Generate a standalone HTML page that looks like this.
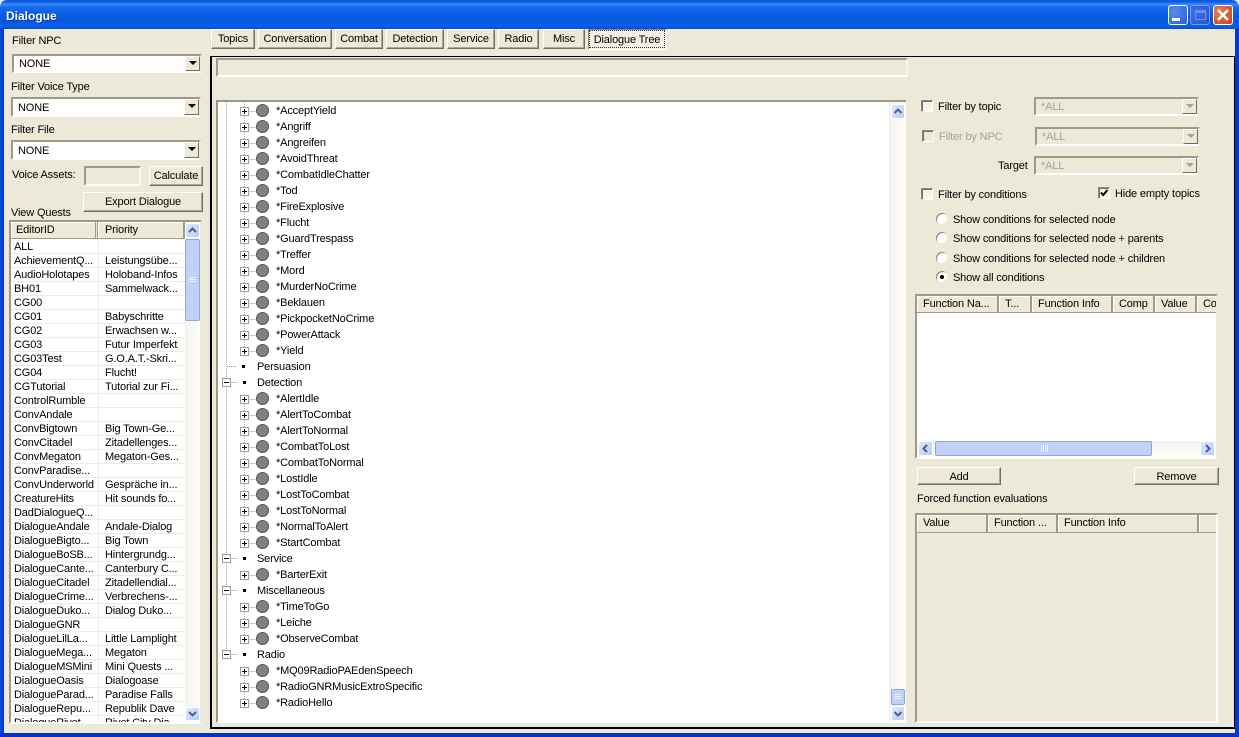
<!DOCTYPE html>
<html><head><meta charset="utf-8"><title>Dialogue</title>
<style>
html,body{margin:0;padding:0;background:#ece9d8}
body{width:1239px;height:737px;position:relative;overflow:hidden;font:11px/14px "Liberation Sans",sans-serif;color:#000;letter-spacing:-.15px}
div,span{box-sizing:border-box}
.a{position:absolute}
.t{position:absolute;white-space:nowrap;line-height:14px}
.g{color:#a5a294}
.title{left:0;top:0;width:1239px;height:29px;border-radius:7px 7px 0 0;background:linear-gradient(#0a58e0 0,#0a5ce8 2px,#3a8cf6 4px,#1a6cf0 7px,#0a5ce2 14px,#0858de 22px,#0a60ea 26px,#0650d0 29px)}
.btn{position:absolute;background:#ece9d8;border:1px solid;border-color:#fff #716f64 #716f64 #fff;box-shadow:inset -1px -1px 0 #aca899;text-align:center;line-height:14px;padding-top:2px;white-space:nowrap}
.sunk{position:absolute;border:2px solid;border-color:#9d9a8a #f6f5ef #fff #9d9a8a;background:#ece9d8}
.combo{position:absolute;border:2px solid;border-color:#9d9a8a #ece9d8 #fff #9d9a8a;background:#fff;line-height:14px;padding-left:5px;padding-top:1px}
.combo.d{background:#ece9d8;color:#a5a294}
.arrow{position:absolute;right:0;top:0;bottom:0;width:15px;background:#ece9d8;border:1px solid;border-color:#fff #716f64 #716f64 #fff}
.arrow:after{content:"";position:absolute;left:3px;top:4px;border:4px solid transparent;border-top:4px solid #000;border-bottom:0}
.d .arrow:after{border-top-color:#a5a294}
.cb{position:absolute;width:12px;height:12px;border:1px solid;border-color:#8f8c7c #fff #fff #8f8c7c;box-shadow:inset 1px 1px 0 #716f64;background:#f4f3ec}
.rd{position:absolute;width:12px;height:12px;border-radius:50%;background:#fff;box-shadow:inset 1px 1px 0 #8f8c7c,inset -1px -1px 0 #ece9d8}
.hd{position:absolute;background:#ece9d8;border-right:2px solid #9d9a8a;border-bottom:1px solid #9d9a8a;padding-left:6px;line-height:17px;white-space:nowrap;overflow:hidden;box-shadow:inset 1px 1px 0 #fff}
.sb{position:absolute;border-radius:2px;background:linear-gradient(135deg,#dfe8fd,#b9ccf6);border:1px solid #fff}
.sb svg{position:absolute;left:0;top:0}
.th{position:absolute;border-radius:2px;background:#c0d2f7;border:1px solid #8fa6dc}
.row{height:14px;position:relative;border-bottom:1px solid #ecebe4;white-space:nowrap;line-height:14px}
.row b{font-weight:400;position:absolute;left:3px;top:0}
.row i{font-style:normal;position:absolute;left:94px;top:0}
.row:before{content:"";position:absolute;left:87px;top:0;bottom:0;width:1px;background:#ecebe4}
.tr{position:absolute;white-space:nowrap;line-height:14px}
</style></head><body>

<div class="a title"></div>
<div class="t" style="left:6px;top:9px;color:#fff;font-weight:700;font-size:12px;letter-spacing:0;text-shadow:1px 1px 0 #0a3aa0">Dialogue</div>

<!-- title buttons -->
<div class="a" style="left:1168px;top:5px;width:20px;height:20px;border:1px solid #fff;border-radius:3px;background:radial-gradient(circle at 30% 30%,#5a8cf0,#2a5ce0)"><div class="a" style="left:3px;top:12px;width:8px;height:3px;background:#fff"></div></div>
<div class="a" style="left:1190px;top:5px;width:20px;height:20px;border:1px solid #7d9cea;border-radius:3px;background:radial-gradient(circle at 30% 30%,#3a70e8,#2254d8)"><div class="a" style="left:4px;top:4px;width:11px;height:10px;border:1px solid #6a90ec;border-top:3px solid #6a90ec"></div></div>
<div class="a" style="left:1213px;top:5px;width:20px;height:20px;border:1px solid #fff;border-radius:3px;background:radial-gradient(circle at 30% 30%,#e8805c,#c8401c)"><svg width="18" height="18" style="position:absolute;left:0;top:0"><path d="M4 4L14 14M14 4L4 14" stroke="#fff" stroke-width="2.4"/></svg></div>

<!-- frame -->
<div class="a" style="left:0;top:29px;width:4px;height:708px;background:linear-gradient(90deg,#0a50d8,#0831d9)"></div>
<div class="a" style="left:1235px;top:29px;width:4px;height:708px;background:linear-gradient(90deg,#0831d9,#0a3ac0)"></div>
<div class="a" style="left:0;top:733px;width:1239px;height:4px;background:#0831c9"></div>

<!-- Left panel -->
<div class="t" style="left:12px;top:34px">Filter NPC</div>
<div class="combo" style="left:12px;top:54px;width:190px;height:19px">NONE<div class="arrow"></div></div>
<div class="t" style="left:11px;top:80px">Filter Voice Type</div>
<div class="combo" style="left:11px;top:97px;width:190px;height:20px;padding-top:2px">NONE<div class="arrow"></div></div>
<div class="t" style="left:11px;top:123px">Filter File</div>
<div class="combo" style="left:11px;top:140px;width:190px;height:20px;padding-top:2px">NONE<div class="arrow"></div></div>
<div class="t" style="left:12px;top:168px">Voice Assets:</div>
<div class="sunk" style="left:84px;top:166px;width:57px;height:20px"></div>
<div class="btn" style="left:149px;top:166px;width:54px;height:20px">Calculate</div>
<div class="btn" style="left:83px;top:192px;width:120px;height:20px">Export Dialogue</div>
<div class="t" style="left:11px;top:206px">View Quests</div>

<!-- Quest list -->
<div class="a" style="left:9px;top:220px;width:193px;height:504px;border:2px solid;border-color:#9d9a8a #ece9d8 #fff #9d9a8a;background:#fff;overflow:hidden">
 <div class="hd" style="left:0;top:0;width:87px;height:17px;border-right:3px double #9d9a8a;padding-left:5px">EditorID</div>
 <div class="hd" style="left:87px;top:0;width:87px;height:17px;padding-left:7px">Priority</div>
 <div class="a" style="left:0;top:18px;width:174px;height:486px;overflow:hidden">
  <div class="row"><b>ALL</b></div>
  <div class="row"><b>AchievementQ...</b><i>Leistungsübe...</i></div>
  <div class="row"><b>AudioHolotapes</b><i>Holoband-Infos</i></div>
  <div class="row"><b>BH01</b><i>Sammelwack...</i></div>
  <div class="row"><b>CG00</b></div>
  <div class="row"><b>CG01</b><i>Babyschritte</i></div>
  <div class="row"><b>CG02</b><i>Erwachsen w...</i></div>
  <div class="row"><b>CG03</b><i>Futur Imperfekt</i></div>
  <div class="row"><b>CG03Test</b><i>G.O.A.T.-Skri...</i></div>
  <div class="row"><b>CG04</b><i>Flucht!</i></div>
  <div class="row"><b>CGTutorial</b><i>Tutorial zur Fi...</i></div>
  <div class="row"><b>ControlRumble</b></div>
  <div class="row"><b>ConvAndale</b></div>
  <div class="row"><b>ConvBigtown</b><i>Big Town-Ge...</i></div>
  <div class="row"><b>ConvCitadel</b><i>Zitadellenges...</i></div>
  <div class="row"><b>ConvMegaton</b><i>Megaton-Ges...</i></div>
  <div class="row"><b>ConvParadise...</b></div>
  <div class="row"><b>ConvUnderworld</b><i>Gespräche in...</i></div>
  <div class="row"><b>CreatureHits</b><i>Hit sounds fo...</i></div>
  <div class="row"><b>DadDialogueQ...</b></div>
  <div class="row"><b>DialogueAndale</b><i>Andale-Dialog</i></div>
  <div class="row"><b>DialogueBigto...</b><i>Big Town</i></div>
  <div class="row"><b>DialogueBoSB...</b><i>Hintergrundg...</i></div>
  <div class="row"><b>DialogueCante...</b><i>Canterbury C...</i></div>
  <div class="row"><b>DialogueCitadel</b><i>Zitadellendial...</i></div>
  <div class="row"><b>DialogueCrime...</b><i>Verbrechens-...</i></div>
  <div class="row"><b>DialogueDuko...</b><i>Dialog Duko...</i></div>
  <div class="row"><b>DialogueGNR</b></div>
  <div class="row"><b>DialogueLilLa...</b><i>Little Lamplight</i></div>
  <div class="row"><b>DialogueMega...</b><i>Megaton</i></div>
  <div class="row"><b>DialogueMSMini</b><i>Mini Quests ...</i></div>
  <div class="row"><b>DialogueOasis</b><i>Dialogoase</i></div>
  <div class="row"><b>DialogueParad...</b><i>Paradise Falls</i></div>
  <div class="row"><b>DialogueRepu...</b><i>Republik Dave</i></div>
  <div class="row"><b>DialogueRivet...</b><i>Rivet City Dia...</i></div>
 </div>
 <div class="a" style="left:174px;top:0;width:15px;height:500px;background:linear-gradient(90deg,#f3f1ec,#fdfdfa)"></div>
 <div class="sb" style="left:174px;top:1px;width:15px;height:15px"><svg width="13" height="13"><path d="M3 8L6.5 4.5L10 8" fill="none" stroke="#4d6185" stroke-width="2"/></svg></div>
 <div class="th" style="left:174px;top:17px;width:15px;height:82px"><svg width="13" height="80" style="position:absolute;left:0;top:0"><path d="M3 37.5H10M3 39.5H10M3 41.5H10" stroke="#eef3fd" stroke-width="1"/></svg></div>
 <div class="sb" style="left:174px;top:485px;width:15px;height:14px"><svg width="13" height="12"><path d="M3 4L6.5 7.5L10 4" fill="none" stroke="#4d6185" stroke-width="2"/></svg></div>
</div>

<!-- Tabs -->
<div class="btn" style="left:211px;top:29px;width:44px;height:20px">Topics</div>
<div class="btn" style="left:258px;top:29px;width:74px;height:20px">Conversation</div>
<div class="btn" style="left:335px;top:29px;width:48px;height:20px">Combat</div>
<div class="btn" style="left:386px;top:29px;width:58px;height:20px">Detection</div>
<div class="btn" style="left:447px;top:29px;width:48px;height:20px">Service</div>
<div class="btn" style="left:498px;top:29px;width:41px;height:20px">Radio</div>
<div class="btn" style="left:543px;top:29px;width:42px;height:20px">Misc</div>
<div class="a" style="left:588px;top:29px;width:79px;height:21px;background:#f3f1e6;border:1px solid #8f8c7c;border-right-color:#fff;border-bottom-color:#fff"></div>
<div class="a" style="left:589px;top:30px;width:76px;height:18px;border:1px dotted #333;text-align:center;line-height:14px;padding-top:2px;white-space:nowrap">Dialogue Tree</div>

<!-- Main box -->
<div class="a" style="left:210px;top:56px;width:1025px;height:673px;border:1px solid #000;border-left-width:2px;border-bottom-width:2px"></div>
<div class="sunk" style="left:216px;top:58px;width:692px;height:19px"></div>

<!-- Tree -->
<div class="a" style="left:216px;top:100px;width:690px;height:623px;border:2px solid;border-color:#9d9a8a #ece9d8 #fff #9d9a8a;background:#fff;border-right:0"></div>
<div class="a" style="left:889px;top:102px;width:16px;height:620px;background:linear-gradient(90deg,#f3f1ec,#fdfdfa)"></div>
<div class="sb" style="left:891px;top:104px;width:14px;height:15px"><svg width="12" height="13"><path d="M2.5 8L6 4.5L9.5 8" fill="none" stroke="#4d6185" stroke-width="2"/></svg></div>
<div class="th" style="left:891px;top:689px;width:14px;height:16px"><svg width="12" height="14" style="position:absolute;left:0;top:0"><path d="M3 4.5H9M3 6.5H9M3 8.5H9" stroke="#eef3fd"/></svg></div>
<div class="sb" style="left:891px;top:706px;width:14px;height:15px"><svg width="12" height="13"><path d="M2.5 5L6 8.5L9.5 5" fill="none" stroke="#4d6185" stroke-width="2"/></svg></div>

<svg class="a" style="left:216px;top:100px" width="220" height="620">
<defs>
<g id="p"><path d="M4 1H12" stroke="#999" stroke-dasharray="1 1"/><rect x="-4" y="-3" width="8" height="8" fill="#fff" stroke="#a09e90"/><path d="M-2.5 1H2.5M0 -1.5V3.5" stroke="#000"/><circle cx="18" cy="0" r="6" fill="#808080" stroke="#555"/></g>
<g id="m"><path d="M4 0H12" stroke="#999" stroke-dasharray="1 1"/><rect x="-4" y="-4" width="8" height="8" fill="#fff" stroke="#a09e90"/><path d="M-2.5 0H2.5" stroke="#000"/><rect x="16.5" y="-1.5" width="3" height="3" fill="#000"/></g>
</defs>
<path d="M10.5 2V282M10.5 284V458M10.5 460V490M10.5 492V554M28.5 2V250M28.5 300V442M28.5 506V538M28.5 570V602" stroke="#a5a5a5" stroke-dasharray="1 1"/>
<g transform="translate(28.5 10.5)"><use href="#p"/><use href="#p" y="16"/><use href="#p" y="32"/><use href="#p" y="48"/><use href="#p" y="64"/><use href="#p" y="80"/><use href="#p" y="96"/><use href="#p" y="112"/><use href="#p" y="128"/><use href="#p" y="144"/><use href="#p" y="160"/><use href="#p" y="176"/><use href="#p" y="192"/><use href="#p" y="208"/><use href="#p" y="224"/><use href="#p" y="240"/>
<use href="#p" y="288"/><use href="#p" y="304"/><use href="#p" y="320"/><use href="#p" y="336"/><use href="#p" y="352"/><use href="#p" y="368"/><use href="#p" y="384"/><use href="#p" y="400"/><use href="#p" y="416"/><use href="#p" y="432"/>
<use href="#p" y="464"/><use href="#p" y="496"/><use href="#p" y="512"/><use href="#p" y="528"/><use href="#p" y="560"/><use href="#p" y="576"/><use href="#p" y="592"/></g>
<path d="M11 266.5H20" stroke="#999" stroke-dasharray="1 1"/><rect x="26" y="265" width="3" height="3" fill="#000"/>
<g transform="translate(10.5 282.5)"><use href="#m"/><use href="#m" y="176"/><use href="#m" y="208"/><use href="#m" y="272"/></g>
</svg>

<div class="a" style="left:0;top:1px;width:0;height:0">
<div class="tr" style="left:276px;top:103px">*AcceptYield</div>
<div class="tr" style="left:276px;top:119px">*Angriff</div>
<div class="tr" style="left:276px;top:135px">*Angreifen</div>
<div class="tr" style="left:276px;top:151px">*AvoidThreat</div>
<div class="tr" style="left:276px;top:167px">*CombatIdleChatter</div>
<div class="tr" style="left:276px;top:183px">*Tod</div>
<div class="tr" style="left:276px;top:199px">*FireExplosive</div>
<div class="tr" style="left:276px;top:215px">*Flucht</div>
<div class="tr" style="left:276px;top:231px">*GuardTrespass</div>
<div class="tr" style="left:276px;top:247px">*Treffer</div>
<div class="tr" style="left:276px;top:263px">*Mord</div>
<div class="tr" style="left:276px;top:279px">*MurderNoCrime</div>
<div class="tr" style="left:276px;top:295px">*Beklauen</div>
<div class="tr" style="left:276px;top:311px">*PickpocketNoCrime</div>
<div class="tr" style="left:276px;top:327px">*PowerAttack</div>
<div class="tr" style="left:276px;top:343px">*Yield</div>
<div class="tr" style="left:257px;top:359px">Persuasion</div>
<div class="tr" style="left:257px;top:375px">Detection</div>
<div class="tr" style="left:276px;top:391px">*AlertIdle</div>
<div class="tr" style="left:276px;top:407px">*AlertToCombat</div>
<div class="tr" style="left:276px;top:423px">*AlertToNormal</div>
<div class="tr" style="left:276px;top:439px">*CombatToLost</div>
<div class="tr" style="left:276px;top:455px">*CombatToNormal</div>
<div class="tr" style="left:276px;top:471px">*LostIdle</div>
<div class="tr" style="left:276px;top:487px">*LostToCombat</div>
<div class="tr" style="left:276px;top:503px">*LostToNormal</div>
<div class="tr" style="left:276px;top:519px">*NormalToAlert</div>
<div class="tr" style="left:276px;top:535px">*StartCombat</div>
<div class="tr" style="left:257px;top:551px">Service</div>
<div class="tr" style="left:276px;top:567px">*BarterExit</div>
<div class="tr" style="left:257px;top:583px">Miscellaneous</div>
<div class="tr" style="left:276px;top:599px">*TimeToGo</div>
<div class="tr" style="left:276px;top:615px">*Leiche</div>
<div class="tr" style="left:276px;top:631px">*ObserveCombat</div>
<div class="tr" style="left:257px;top:647px">Radio</div>
<div class="tr" style="left:276px;top:663px">*MQ09RadioPAEdenSpeech</div>
<div class="tr" style="left:276px;top:679px">*RadioGNRMusicExtroSpecific</div>
<div class="tr" style="left:276px;top:695px">*RadioHello</div>
</div>

<!-- Right panel -->
<div class="cb" style="left:921px;top:100px"></div>
<div class="t" style="left:938px;top:100px">Filter by topic</div>
<div class="combo d" style="left:1034px;top:97px;width:165px;height:19px">*ALL<div class="arrow"></div></div>
<div class="cb" style="left:922px;top:130px;background:#ece9d8"></div>
<div class="t g" style="left:939px;top:130px">Filter by NPC</div>
<div class="combo d" style="left:1035px;top:127px;width:165px;height:19px">*ALL<div class="arrow"></div></div>
<div class="t" style="left:998px;top:159px">Target</div>
<div class="combo d" style="left:1034px;top:156px;width:165px;height:19px">*ALL<div class="arrow"></div></div>
<div class="cb" style="left:921px;top:188px"></div>
<div class="t" style="left:938px;top:188px">Filter by conditions</div>
<div class="cb" style="left:1098px;top:187px"><svg width="10" height="10" style="position:absolute;left:0;top:0"><path d="M2 4.5L4.2 7L8.5 2" fill="none" stroke="#000" stroke-width="2"/></svg></div>
<div class="t" style="left:1115px;top:187px">Hide empty topics</div>
<div class="rd" style="left:936px;top:213px"></div>
<div class="t" style="left:953px;top:213px">Show conditions for selected node</div>
<div class="rd" style="left:936px;top:232px"></div>
<div class="t" style="left:953px;top:232px">Show conditions for selected node + parents</div>
<div class="rd" style="left:936px;top:252px"></div>
<div class="t" style="left:953px;top:252px">Show conditions for selected node + children</div>
<div class="rd" style="left:936px;top:271px"><div class="a" style="left:4px;top:4px;width:4px;height:4px;border-radius:50%;background:#000"></div></div>
<div class="t" style="left:953px;top:271px">Show all conditions</div>

<!-- Function list -->
<div class="a" style="left:915px;top:294px;width:303px;height:165px;border:2px solid;border-color:#9d9a8a #ece9d8 #fff #9d9a8a;background:#fff;overflow:hidden">
 <div class="hd" style="left:0;top:0;width:82px;height:17px">Function Na...</div>
 <div class="hd" style="left:82px;top:0;width:33px;height:17px">T...</div>
 <div class="hd" style="left:115px;top:0;width:81px;height:17px">Function Info</div>
 <div class="hd" style="left:196px;top:0;width:42px;height:17px">Comp</div>
 <div class="hd" style="left:238px;top:0;width:42px;height:17px">Value</div>
 <div class="hd" style="left:280px;top:0;width:30px;height:17px;border-right:0">Co</div>
 <div class="a" style="left:0;top:145px;width:299px;height:16px;background:linear-gradient(#f3f1ec,#fdfdfa)"></div>
 <div class="sb" style="left:1px;top:145px;width:15px;height:15px"><svg width="13" height="13"><path d="M8 3L4.5 6.5L8 10" fill="none" stroke="#4d6185" stroke-width="2"/></svg></div>
 <div class="th" style="left:18px;top:145px;width:217px;height:15px"><svg width="215" height="13" style="position:absolute;left:0;top:0"><path d="M105.5 3V10M107.5 3V10M109.5 3V10M111.5 3V10" stroke="#eef3fd"/></svg></div>
 <div class="sb" style="left:283px;top:145px;width:15px;height:15px"><svg width="13" height="13"><path d="M5 3L8.5 6.5L5 10" fill="none" stroke="#4d6185" stroke-width="2"/></svg></div>
</div>
<div class="btn" style="left:917px;top:467px;width:84px;height:18px;padding-top:2px">Add</div>
<div class="btn" style="left:1134px;top:467px;width:85px;height:18px;padding-top:2px">Remove</div>
<div class="t" style="left:917px;top:492px">Forced function evaluations</div>

<!-- Forced list -->
<div class="a" style="left:915px;top:513px;width:303px;height:210px;border:2px solid;border-color:#9d9a8a #fff #fff #9d9a8a;background:#ece9d8;overflow:hidden">
 <div class="hd" style="left:0;top:0;width:71px;height:18px">Value</div>
 <div class="hd" style="left:71px;top:0;width:70px;height:18px">Function ...</div>
 <div class="hd" style="left:141px;top:0;width:141px;height:18px">Function Info</div>
 <div class="hd" style="left:282px;top:0;width:20px;height:18px;border-right:0"></div>
</div>
</body></html>
